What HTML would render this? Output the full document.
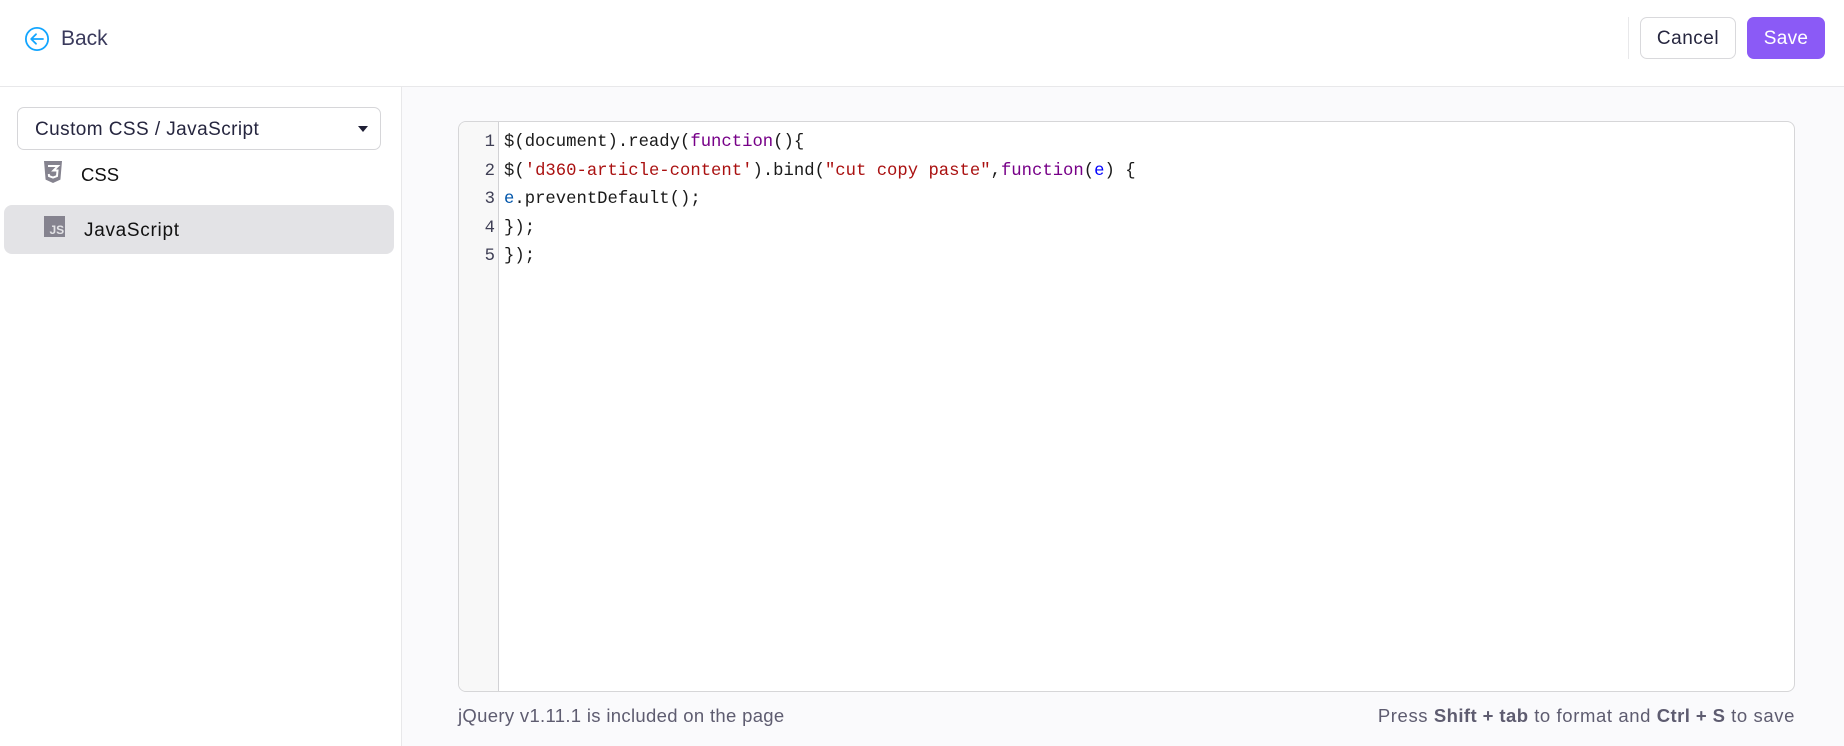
<!DOCTYPE html>
<html lang="en"><head><meta charset="utf-8"><title>Custom CSS / JavaScript</title>
<style>
html,body{margin:0;padding:0;width:1844px;height:746px;overflow:hidden;background:#fff;font-family:"Liberation Sans",sans-serif}
.a{position:absolute;white-space:nowrap}
.main{left:402px;top:87px;width:1442px;height:659px;background:#fafafc}
.hline{left:0;top:86px;width:1844px;height:1px;background:#e8e8ea}
.vline{left:401px;top:87px;width:1px;height:659px;background:#e8e8ea}
.btn{box-sizing:border-box;top:17px;height:42px;border-radius:7px;text-align:center;line-height:41px;font-size:19px}
.code{font-family:"Liberation Mono",monospace;font-size:17.25px;line-height:28.6px;color:#1a1a1a}
.k{color:#770088}.s{color:#aa1111}.v{color:#0055aa}.d{color:#0000ff}
.foot{top:704px;font-size:18.5px;line-height:24px;color:#5e5c70}
.foot b{letter-spacing:.42px}
</style></head><body>
<div class="a main"></div>
<div class="a hline"></div>
<div class="a vline"></div>

<svg class="a" style="left:24px;top:26px" width="26" height="26" viewBox="0 0 26 26" fill="none" stroke="#12a5ff" stroke-width="1.8" stroke-linecap="round" stroke-linejoin="round"><circle cx="13" cy="13" r="11.1"/><path d="M19 13H7.200M12 8.200 7.200 13l4.800 4.800"/></svg>
<div class="a" style="left:61px;top:26px;font-size:21px;line-height:26px;color:#3a3a5c">Back</div>

<div class="a" style="left:1628px;top:17px;width:1px;height:42px;background:#e8e8ea"></div>
<div class="a btn" style="left:1640px;width:96px;border:1px solid #d9d9dc;background:#fff;color:#26263f;letter-spacing:.5px">Cancel</div>
<div class="a btn" style="left:1747px;width:78px;background:#8b5af6;color:#fff;line-height:43px;letter-spacing:.3px">Save</div>

<div class="a" style="box-sizing:border-box;left:17px;top:107px;width:364px;height:43px;border:1px solid #d6d6d9;border-radius:7px;background:#fff"></div>
<div class="a" style="left:35px;top:117px;font-size:19px;line-height:25px;color:#26263f;letter-spacing:.43px">Custom CSS / JavaScript</div>
<div class="a" style="left:358px;top:126px;width:0;height:0;border-left:5.5px solid transparent;border-right:5.5px solid transparent;border-top:6px solid #1f1f35"></div>

<svg class="a" style="left:44px;top:161px" width="18" height="22" viewBox="0 0 18 22"><path fill="#85838f" d="M0 0h18l-1.600 18.600L9 22l-7.400-3.400z"/><path fill="none" stroke="#fff" stroke-width="2" d="M4 5h10l-4.500 4.500h4l-.5 5.500-4 1.500-4-1.500-.2-2"/></svg>
<div class="a" style="left:81px;top:162px;font-size:18.500px;line-height:25px;color:#111">CSS</div>

<div class="a" style="left:4px;top:205px;width:390px;height:49px;border-radius:8px;background:#e3e3e6"></div>
<div class="a" style="left:44px;top:216px;width:21px;height:21px;background:#85838f"></div>
<div class="a" style="left:49.500px;top:223.500px;width:15px;font-size:12px;line-height:13px;font-weight:bold;color:#e3e3e6">JS</div>
<div class="a" style="left:84px;top:217.500px;font-size:19px;line-height:25px;color:#111;letter-spacing:.7px">JavaScript</div>

<div class="a" style="box-sizing:border-box;left:458px;top:121px;width:1337px;height:571px;border:1px solid #d6d6d8;border-radius:8px;background:#fff;overflow:hidden">
  <div style="position:absolute;left:0;top:0;width:39px;height:569px;background:#f8f8f8;border-right:1px solid #d2d2d5"></div>
</div>
<div class="a code" style="left:458px;top:129px;width:37px;text-align:right;color:#3f3f55">1<br>2<br>3<br>4<br>5</div>
<div class="a code" style="left:504px;top:129px">$(document).ready(<span class="k">function</span>(){<br>$(<span class="s">'d360-article-content'</span>).bind(<span class="s">"cut copy paste"</span>,<span class="k">function</span>(<span class="d">e</span>) {<br><span class="v">e</span>.preventDefault();<br>});<br>});</div>

<div class="a foot" style="left:458px;letter-spacing:.32px">jQuery v1.11.1 is included on the page</div>
<div class="a foot" style="right:49px;letter-spacing:.6px">Press <b>Shift + tab</b> to format and <b>Ctrl + S</b> to save</div>
</body></html>
